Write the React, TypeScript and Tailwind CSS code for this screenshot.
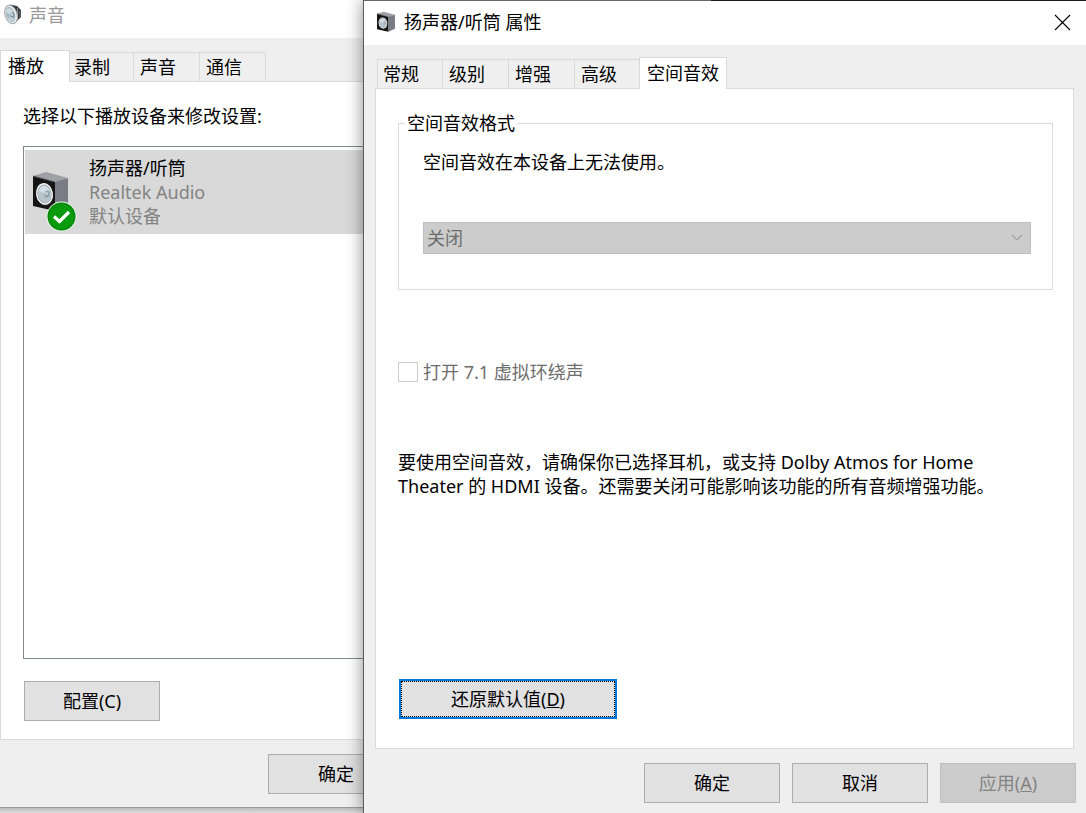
import type { ReactNode } from "react";
import clsx from "clsx";

const playbackTabs = ["播放", "录制", "声音", "通信"];
const propertyTabs = ["常规", "级别", "增强", "高级", "空间音效"];

function Tabs({ items, active }: { items: string[]; active: string }) {
  return (
    <div role="tablist" className="relative z-10 -mb-px flex items-end">
      {items.map((item, i) => {
        const selected = item === active;
        return (
          <button
            key={item}
            type="button"
            role="tab"
            aria-selected={selected}
            className={clsx(
              "border-[#d9d9d9] text-left",
              // the selected tab is taller and overlaps its neighbours
              selected && "relative z-10 h-8 border-x border-t bg-white pb-0.5 pl-[7px]",
              selected && (i === 0 ? "-mr-0.5 pr-[25px]" : "-ml-0.5 pr-[7px]"),
              !selected && "h-[30px] border-y border-r pr-[23px]",
              !selected && (i === 0 ? "border-l pl-[5px]" : "pl-1.5")
            )}
          >
            {item}
          </button>
        );
      })}
    </div>
  );
}

function DialogButton({ children, disabled }: { children: ReactNode; disabled?: boolean }) {
  return (
    <button
      type="button"
      disabled={disabled}
      className="h-10 w-[136px] shrink-0 border border-[#adadad] bg-[#e1e1e1] disabled:border-[#bfbfbf] disabled:bg-[#cccccc] disabled:text-[#838383]"
    >
      {children}
    </button>
  );
}

function ConeIcon() {
  return (
    <svg width="20" height="24" viewBox="0 0 20 24" aria-hidden="true">
      <path d="M7 1.5 L14 3 L18 7 V14 L14 18 L9 21 Z" fill="#3a3d40" />
      <path d="M14.5 5 V17" stroke="#85898c" />
      <path d="M17 7.5 V14" stroke="#6d7275" />
      <ellipse cx="8" cy="11.5" rx="6" ry="9.5" transform="rotate(-18 8 11.5)" fill="#f1f3f4" stroke="#a3a7aa" />
      <ellipse cx="7.5" cy="11.5" rx="4.5" ry="8" transform="rotate(-18 7.5 11.5)" fill="#a9bbc6" />
      <path d="M4 6 C6 4 9 6 10 10 L8 12 L3 9 Z" fill="#cedae1" />
      <path d="M5 16 L8 13 L11 16 C10 19 8 19 5 16 Z" fill="#c3d1d9" />
      <ellipse cx="9.5" cy="12" rx="2" ry="2.8" fill="#8295a1" />
      <ellipse cx="9" cy="11.5" rx="1" ry="1.5" fill="#d3dde3" />
    </svg>
  );
}

function BoxShape() {
  return (
    <>
      <path d="M3 5 L16 1 L38 7 L26 11 Z" fill="#9da0a5" />
      <path d="M25 11 L38 7 V34 L25 40 Z" fill="#797c85" />
      <path d="M3 5 L25 11 V40 L3 35 Z" fill="#151515" />
      <path d="M3 5 L25 11" stroke="#55585d" />
      <ellipse cx="14.5" cy="23" rx="8.5" ry="11" transform="rotate(-10 14.5 23)" fill="#f3f3f3" />
      <ellipse cx="14.5" cy="23" rx="7" ry="9.5" transform="rotate(-10 14.5 23)" fill="#8f999f" />
      <ellipse cx="14.5" cy="23" rx="6.5" ry="9" transform="rotate(-10 14.5 23)" fill="#b8c5cd" />
      <path d="M9 20 C10 14 17 13 19 19 L16 23 Z" fill="#d5dfe5" />
      <ellipse cx="17" cy="23" rx="2.5" ry="3.5" fill="#8c9da7" />
      <ellipse cx="16.5" cy="22.5" rx="1.5" ry="2" fill="#c4d0d7" />
    </>
  );
}

function DeviceIcon() {
  return (
    <svg width="48" height="64" viewBox="0 0 48 64" aria-hidden="true">
      <g transform="translate(0 2)">
        <BoxShape />
      </g>
      <circle cx="31.5" cy="47.5" r="15" fill="#e8f3e8" />
      <circle cx="31.5" cy="47.5" r="14" fill="#078a0c" />
      <circle cx="31.5" cy="47.5" r="12.5" fill="#0a9a0e" />
      <path d="M24 47.5 L29.5 52.5 L39 43" fill="none" stroke="#fff" strokeWidth="3.2" />
    </svg>
  );
}

function SoundWindow() {
  return (
    <section className="flex w-[363px] shrink-0 flex-col overflow-hidden bg-[linear-gradient(to_top,#dcdcdc,#bdbdbd_5px)] pb-[5px]">
      <div className="flex flex-1 flex-col border-b border-[#999999] bg-[#efefef]">
        <header className="flex h-[38px] items-start gap-1.5 bg-white pt-[3px] pl-[3px] text-[#999999]">
          <ConeIcon />
          <h2>声音</h2>
        </header>
        <div className="flex flex-1 flex-col pt-3">
          <Tabs items={playbackTabs} active="播放" />
          <div className="flex flex-1 flex-col border-y border-l border-[#d9d9d9] bg-white pt-[22px] pb-[18px] pl-[22px]">
            <p>选择以下播放设备来修改设置:</p>
            <ul className="mt-[18px] flex-1 border-y border-l border-[#828790] pt-[3px] pl-px">
              <li className="flex h-[84px] gap-[11px] bg-[#d9d9d9] py-1.5 pl-[5px]">
                <div className="pt-[13px]">
                  <DeviceIcon />
                </div>
                <div className="text-[#838383]">
                  <p className="text-black">扬声器/听筒</p>
                  <p>Realtek Audio</p>
                  <p>默认设备</p>
                </div>
              </li>
            </ul>
            <div className="mt-[22px] flex pl-px">
              <DialogButton>配置(C)</DialogButton>
            </div>
          </div>
        </div>
        <footer className="flex pt-[14px] pb-[13px] pl-[268px]">
          <DialogButton>确定</DialogButton>
        </footer>
      </div>
    </section>
  );
}

function PropertiesWindow() {
  return (
    <section className="relative z-10 flex flex-1 flex-col border-l border-[#5c5c5c] bg-[#efefef] shadow-[0_0_16px_rgba(0,0,0,0.45)]">
      <div className="h-px bg-[linear-gradient(90deg,#666666_48%,#1c1a1c_48%)]" />
      <header className="flex h-11 items-center bg-white pr-[15px] pb-0.5 pl-3">
        <svg width="20" height="22" viewBox="1 0 39 42" aria-hidden="true">
          <BoxShape />
        </svg>
        <h1 className="ml-2 flex-1">扬声器/听筒 属性</h1>
        <button type="button" aria-label="关闭">
          <svg width="17" height="17" viewBox="0 0 17 17" aria-hidden="true">
            <path d="M1 1 L16 16 M16 1 L1 16" stroke="#000" strokeWidth="1.1" />
          </svg>
        </button>
      </header>
      <div className="flex flex-1 flex-col pt-3 pr-3 pl-[11px]">
        <div className="pl-0.5">
          <Tabs items={propertyTabs} active="空间音效" />
        </div>
        <div className="flex flex-1 flex-col border border-[#d9d9d9] bg-white pt-[22px] pr-5 pb-[29px] pl-[22px]">
          <fieldset className="border border-[#dcdcdc] pr-[21px] pb-[35px] pl-6">
            <legend className="-ml-[18px] px-0.5">空间音效格式</legend>
            <p className="pt-[15px]">空间音效在本设备上无法使用。</p>
            <div className="relative mt-12">
              <select
                disabled
                aria-label="空间音效格式"
                className="h-8 w-full appearance-none border border-[#bfbfbf] bg-[#cccccc] pl-[3px] text-[#6d6d6d] opacity-100"
              >
                <option>关闭</option>
              </select>
              <svg className="absolute top-3 right-2" width="12" height="8" viewBox="0 0 12 8" aria-hidden="true">
                <path d="M1 1 L6 6 L11 1" fill="none" stroke="#a0a0a0" strokeWidth="1.2" />
              </svg>
            </div>
          </fieldset>
          <label className="mt-[70px] flex items-center gap-[5px] text-[#6d6d6d]">
            <input type="checkbox" disabled className="size-5 appearance-none border border-[#cccccc] bg-white" />
            打开 7.1 虚拟环绕声
          </label>
          <p className="mt-[66px] mb-8 max-w-[610px]">
            要使用空间音效，请确保你已选择耳机，或支持 Dolby Atmos for Home Theater 的 HDMI 设备。还需要关闭可能影响该功能的所有音频增强功能。
          </p>
          <div className="mt-auto flex pl-px">
            <button type="button" className="h-10 w-[218px] border-2 border-[#0078d7] bg-[#e1e1e1]">
              <span className="flex h-full items-center justify-center border border-dotted border-black">
                还原默认值(<u>D</u>)
              </span>
            </button>
          </div>
        </div>
      </div>
      <footer className="flex justify-end gap-3 pt-[14px] pr-2.5 pb-2.5">
        <DialogButton>确定</DialogButton>
        <DialogButton>取消</DialogButton>
        <DialogButton disabled>
          应用(<u>A</u>)
        </DialogButton>
      </footer>
    </section>
  );
}

export default function App() {
  return (
    <main className="flex min-h-screen bg-[#efefef] font-['Noto_Sans','Noto_Sans_CJK_SC',sans-serif] text-[18px] leading-6 text-black">
      <SoundWindow />
      <PropertiesWindow />
    </main>
  );
}
